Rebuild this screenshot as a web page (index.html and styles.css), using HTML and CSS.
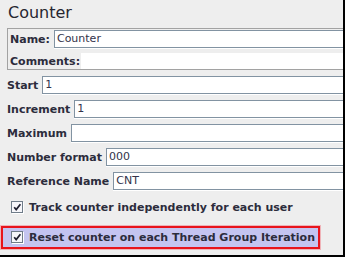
FILE: index.html
```html
<!DOCTYPE html>
<html lang="en">
<head>
    <meta charset="UTF-8">
    <title>Counter</title>
    <link rel="stylesheet" href="styles.css">
</head>
<body>
    <div class="panel">
        <h1 class="title">Counter</h1>

        <div class="name-box">
            <div class="field-row">
                <label>Name:</label>
                <div class="input">Counter</div>
            </div>
            <div class="comments-row">
                <label>Comments:</label>
                <div class="comments"></div>
            </div>
        </div>

        <div class="fields">
            <div class="field-row">
                <label>Start</label>
                <div class="input">1</div>
            </div>
            <div class="field-row">
                <label>Increment</label>
                <div class="input">1</div>
            </div>
            <div class="field-row">
                <label>Maximum</label>
                <div class="input"></div>
            </div>
            <div class="field-row">
                <label>Number format</label>
                <div class="input">000</div>
            </div>
            <div class="field-row">
                <label>Reference Name</label>
                <div class="input">CNT</div>
            </div>
        </div>

        <div class="check-row">
            <svg class="checkbox" width="13" height="13" viewBox="0 0 13 13">
                <rect x="0.5" y="0.5" width="11" height="11" fill="#f6f6fa" stroke="#6f7c89"/>
                <line x1="12.5" y1="1" x2="12.5" y2="13" stroke="#ffffff"/>
                <line x1="1" y1="12.5" x2="13" y2="12.5" stroke="#ffffff"/>
                <path d="M3.2 6.2 L5.2 8.6 L9.4 3.2" fill="none" stroke="#1e1e2e" stroke-width="1.7"/>
            </svg>
            <span>Track counter independently for each user</span>
        </div>

        <div class="check-row highlight">
            <svg class="checkbox" width="13" height="13" viewBox="0 0 13 13">
                <rect x="0.5" y="0.5" width="11" height="11" fill="#f6f6fa" stroke="#6f7c89"/>
                <line x1="12.5" y1="1" x2="12.5" y2="13" stroke="#ffffff"/>
                <line x1="1" y1="12.5" x2="13" y2="12.5" stroke="#ffffff"/>
                <path d="M3.2 6.2 L5.2 8.6 L9.4 3.2" fill="none" stroke="#1e1e2e" stroke-width="1.7"/>
            </svg>
            <span>Reset counter on each Thread Group Iteration</span>
        </div>
    </div>
</body>
</html>
```

FILE: styles.css
```css
body {
    margin: 0;
    font-family: "DejaVu Sans", Verdana, sans-serif;
    color: #2c2c3c;
}
.panel {
    width: 345px;
    height: 257px;
    box-sizing: border-box;
    background: #eeeeee;
    border-right: 2px solid #000;
    border-bottom: 2px solid #000;
    overflow: hidden;
}
.title {
    margin: 0;
    padding: 3px 0 0 8px;
    font-size: 16px;
    font-weight: normal;
    line-height: 19px;
    color: #262630;
}
label {
    font-size: 11px;
    font-weight: bold;
    white-space: nowrap;
}
.name-box {
    margin: 6px 0 0 7px;
    padding: 1px 0 0 2px;
    border: 1px solid #a2a2a2;
    border-right: none;
}
.field-row {
    display: flex;
    align-items: center;
    gap: 4px;
    height: 18px;
}
.input {
    flex: 1;
    height: 18px;
    box-sizing: border-box;
    padding: 0 2px;
    background: #fff;
    border: 1px solid #8293a2;
    border-right: none;
    box-shadow: 0 1px 0 #fff;
    font-size: 11px;
    line-height: 16px;
    color: #33334a;
}
.comments-row {
    display: flex;
    align-items: center;
    height: 16px;
    margin-top: 5px;
}
.comments-row label {
    padding-right: 1px;
}
.comments {
    flex: 1;
    height: 16px;
    background: #fff;
}
.fields {
    display: flex;
    flex-direction: column;
    gap: 6px;
    margin-top: 6px;
    padding-left: 7px;
}
.check-row {
    display: flex;
    align-items: center;
    gap: 5px;
    height: 23px;
    margin-top: 6px;
    padding-left: 11px;
    font-size: 11px;
    font-weight: bold;
}
.check-row span {
    white-space: nowrap;
}
.checkbox {
    flex: none;
}
.highlight {
    width: 319px;
    box-sizing: border-box;
    margin: 7px 0 0 1px;
    padding-left: 8px;
    background: #c4c4f0;
    border: 2px solid #e8141c;
    box-shadow: 0 0 0 1px rgba(240, 120, 130, 0.5);
}
```
